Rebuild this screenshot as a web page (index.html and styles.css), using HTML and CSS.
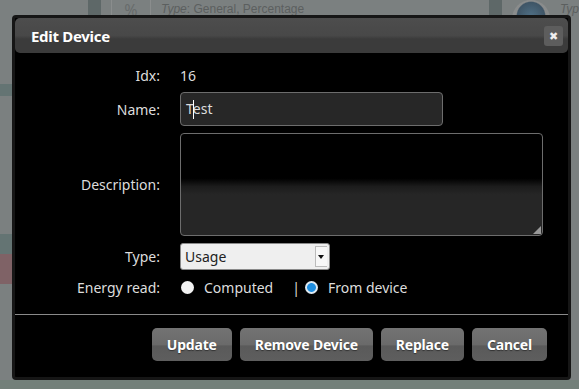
FILE: index.html
```html
<!DOCTYPE html>
<html lang="en">
<head>
  <meta charset="UTF-8" />
  <title>Edit Device</title>
  <link rel="stylesheet" href="styles.css">
</head>
<body>
  <div class="page">
    <div class="tiles">
      <div class="tile-left">
        <span class="tile-mark"></span>
        <span class="tile-icon">%</span>
        <span class="tile-type"><i>Type</i>: General, Percentage</span>
      </div>
      <div class="tile-right">
        <span class="tile-mark"></span>
        <span class="tile-globe"></span>
        <span class="tile-type"><i>Typ</i></span>
      </div>
    </div>
    <div class="side-strip">
      <span class="patch teal p1"></span>
      <span class="patch teal p2"></span>
      <span class="patch red"></span>
    </div>
  </div>

  <div class="overlay"></div>

  <div class="dialog">
    <div class="titlebar">
      <span class="title">Edit Device</span>
      <span class="close">&#10006;</span>
    </div>
    <div class="form">
      <label>Idx:</label>
      <div class="value">16</div>

      <label>Name:</label>
      <div class="field name-field">Test</div>

      <label>Description:</label>
      <div class="field textarea"><span class="grip"></span></div>

      <label>Type:</label>
      <div class="select"><span>Usage</span><span class="arrow"></span></div>

      <label>Energy read:</label>
      <div class="radios">
        <span class="radio"></span>
        <span class="radio-label">Computed</span>
        <span class="pipe">|</span>
        <span class="radio checked"></span>
        <span class="radio-label">From device</span>
      </div>
    </div>
    <div class="buttonpane">
      <button class="btn">Update</button>
      <button class="btn">Remove Device</button>
      <button class="btn">Replace</button>
      <button class="btn">Cancel</button>
    </div>
  </div>
</body>
</html>
```

FILE: styles.css
```css
* {
  box-sizing: border-box;
}
html, body {
  margin: 0;
  padding: 0;
  width: 579px;
  height: 389px;
  overflow: hidden;
  font-family: "Noto Sans", "Open Sans", sans-serif;
}
body {
  position: relative;
  background: #7b8080;
}
.page {
  height: 100%;
}
.tiles {
  display: flex;
  justify-content: space-between;
  height: 20px;
}
.tile-left, .tile-right {
  display: flex;
  align-items: flex-start;
  gap: 10px;
}
.tile-left {
  padding-left: 88px;
}
.tile-mark {
  width: 13px;
  height: 15px;
  background: #5e6868;
}
.tile-icon {
  width: 40px;
  height: 20px;
  border-right: 1px solid #8a8d8d;
  border-left: 1px solid #8a8d8d;
  color: #686c6c;
  font-size: 16px;
  line-height: 20px;
  text-align: center;
}
.tile-type {
  color: #5b5f5f;
  font-family: "Liberation Sans", sans-serif;
  font-size: 12px;
  line-height: 18px;
}
.tile-globe {
  width: 38px;
  height: 20px;
  border-radius: 19px 19px 0 0;
  background: radial-gradient(circle at 50% 80%, #4f6f85 0, #3f5566 55%, #8a8c8c 60%);
}
.side-strip {
  display: flex;
  flex-direction: column;
  width: 12px;
  padding-top: 64px;
}
.patch {
  display: block;
  width: 12px;
}
.teal {
  background: #647473;
}
.p1 {
  height: 12px;
}
.p2 {
  height: 20px;
  margin-top: 138px;
}
.red {
  height: 30px;
  background: #7f6266;
}
.overlay {
  position: absolute;
  left: 0;
  right: 0;
  bottom: 0;
  height: 9px;
  background: #73807a;
}

/* dialog */
.dialog {
  position: absolute;
  left: 12px;
  top: 15px;
  width: 559px;
  height: 365px;
  background: #000;
  border: 3px solid #161616;
  border-radius: 4px;
  color: #ddd;
  font-size: 14px;
}
.titlebar {
  display: flex;
  align-items: center;
  justify-content: space-between;
  height: 35px;
  padding: 0 5px 0 16px;
  border-radius: 5px;
  background: linear-gradient(to bottom, #4d4d4d 0%, #484848 50%, #3b3b3b 60%, #3b3b3b 100%);
}
.title {
  color: #fff;
  font-weight: bold;
  font-size: 15px;
  letter-spacing: -0.3px;
}
.close {
  display: flex;
  align-items: center;
  justify-content: center;
  width: 19px;
  height: 20px;
  border-radius: 3px;
  background: #5d5d5d;
  color: #eee;
  font-size: 11px;
}
.form {
  display: grid;
  grid-template-columns: 145px 1fr;
  grid-template-rows: 20px 34px 103px 27px 20px;
  column-gap: 20px;
  row-gap: 7px;
  align-items: center;
  padding: 12px 25px 0 0;
}
.form label {
  text-align: right;
  color: #ddd;
}
.value {
  color: #ddd;
}
.field {
  border: 1px solid #6d6d6d;
  border-radius: 4px;
  background: #272727;
}
.name-field {
  position: relative;
  width: 263px;
  height: 34px;
  padding-left: 5px;
  line-height: 32px;
  color: #ddd;
}
.name-field::after {
  content: "";
  position: absolute;
  left: 12px;
  top: 7px;
  width: 1px;
  height: 19px;
  background: #fff;
}
.textarea {
  position: relative;
  height: 103px;
  background: linear-gradient(to bottom, #000 0%, #000 44%, #1c1c1c 52%, #262626 60%, #262626 100%);
}
.grip {
  position: absolute;
  right: 1px;
  bottom: 1px;
  width: 8px;
  height: 8px;
  background: radial-gradient(circle, #999 0.8px, transparent 1px) 0 0 / 2px 2px;
  clip-path: polygon(100% 0, 100% 100%, 0 100%);
}
.select {
  display: flex;
  align-items: center;
  justify-content: space-between;
  width: 150px;
  height: 27px;
  padding: 0 2px 0 4px;
  border: 1px solid #8a8a8a;
  border-radius: 3px;
  background: #efefef;
  color: #222;
}
.arrow {
  position: relative;
  width: 12px;
  height: 21px;
  border: 1px solid #bbb;
  border-right: none;
  background: #f7f7f7;
}
.arrow::after {
  content: "";
  position: absolute;
  left: 2px;
  top: 8px;
  border-left: 3px solid transparent;
  border-right: 3px solid transparent;
  border-top: 4px solid #111;
}
.radios {
  display: flex;
  align-items: center;
  color: #ddd;
}
.radio {
  width: 13px;
  height: 13px;
  margin-left: 1px;
  border-radius: 50%;
  background: #f2f2f2;
}
.radio.checked {
  background: radial-gradient(circle, #1e8ee0 0, #1e8ee0 4px, #dfeaf2 4.8px);
}
.radio-label {
  margin-left: 10px;
}
.pipe {
  margin: 0 4px 0 19px;
}
.buttonpane {
  display: flex;
  justify-content: flex-end;
  gap: 8px;
  margin-top: 17px;
  padding: 13px 21px 0 0;
  border-top: 1px solid #8a8a8a;
}
.btn {
  height: 33px;
  padding: 0 15px;
  border: none;
  border-radius: 5px;
  background: linear-gradient(to bottom, #737373 0%, #6a6a6a 50%, #5a5a5a 55%, #5e5e5e 100%);
  color: #fff;
  font-family: "Noto Sans", "Open Sans", sans-serif;
  font-size: 14px;
  font-weight: bold;
  letter-spacing: -0.2px;
  text-shadow: 0 1px 1px #333;
}
```
